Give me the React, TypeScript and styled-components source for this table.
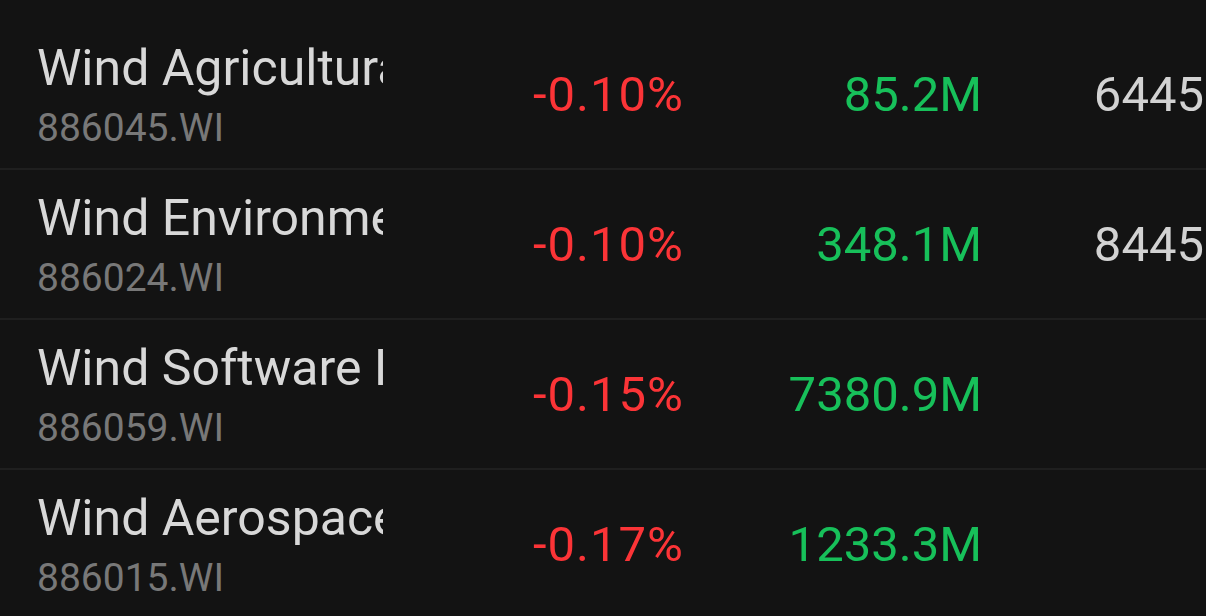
import React from 'react'
import styled, { createGlobalStyle } from 'styled-components'

const GlobalStyle = createGlobalStyle`
  html, body {
    margin: 0;
    padding: 0;
    background: #131313;
    overflow: hidden;
  }
  body {
    font-family: Roboto, 'Noto Sans', sans-serif;
  }
`

const List = styled.div`
  padding-top: 20px;
  width: 1400px;
`

const Row = styled.div`
  display: grid;
  grid-template-columns: 346px 301px 298px 290px;
  align-items: center;
  height: 150px;
  padding-left: 37px;
  box-sizing: border-box;
  border-bottom: 2px solid #1f1f1f;
`

const NameCell = styled.div`
  align-self: start;
  padding-top: 16px;
  overflow: hidden;
  white-space: nowrap;
`

const Name = styled.div`
  font-size: 50px;
  line-height: 64px;
  color: #d8d8d8;
`

const Code = styled.div`
  margin-top: 5px;
  font-size: 39px;
  line-height: 46px;
  color: #787878;
`

const Num = styled.div<{ $tone: 'up' | 'down' | 'plain' }>`
  text-align: right;
  font-size: 49px;
  white-space: nowrap;
  letter-spacing: ${(p) => (p.$tone === 'down' ? '1px' : '0')};
  color: ${(p) =>
    p.$tone === 'down' ? '#fb3437' : p.$tone === 'up' ? '#17c05a' : '#d2d2d2'};
`

const rows = [
  { name: 'Wind Agricultural Products', code: '886045.WI', chg: '-0.10%', amt: '85.2M', last: '6445.83' },
  { name: 'Wind Environmental Protection', code: '886024.WI', chg: '-0.10%', amt: '348.1M', last: '8445.62' },
  { name: 'Wind Software Index', code: '886059.WI', chg: '-0.15%', amt: '7380.9M', last: '6.2' },
  { name: 'Wind Aerospace & Defense', code: '886015.WI', chg: '-0.17%', amt: '1233.3M', last: '1.0' },
]

const App: React.FC = () => {
  return (
    <>
      <GlobalStyle />
      <List>
        {rows.map((r) => (
          <Row key={r.code}>
            <NameCell>
              <Name>{r.name}</Name>
              <Code>{r.code}</Code>
            </NameCell>
            <Num $tone='down'>{r.chg}</Num>
            <Num $tone='up'>{r.amt}</Num>
            <Num $tone='plain'>{r.last}</Num>
          </Row>
        ))}
      </List>
    </>
  )
}

export default App
